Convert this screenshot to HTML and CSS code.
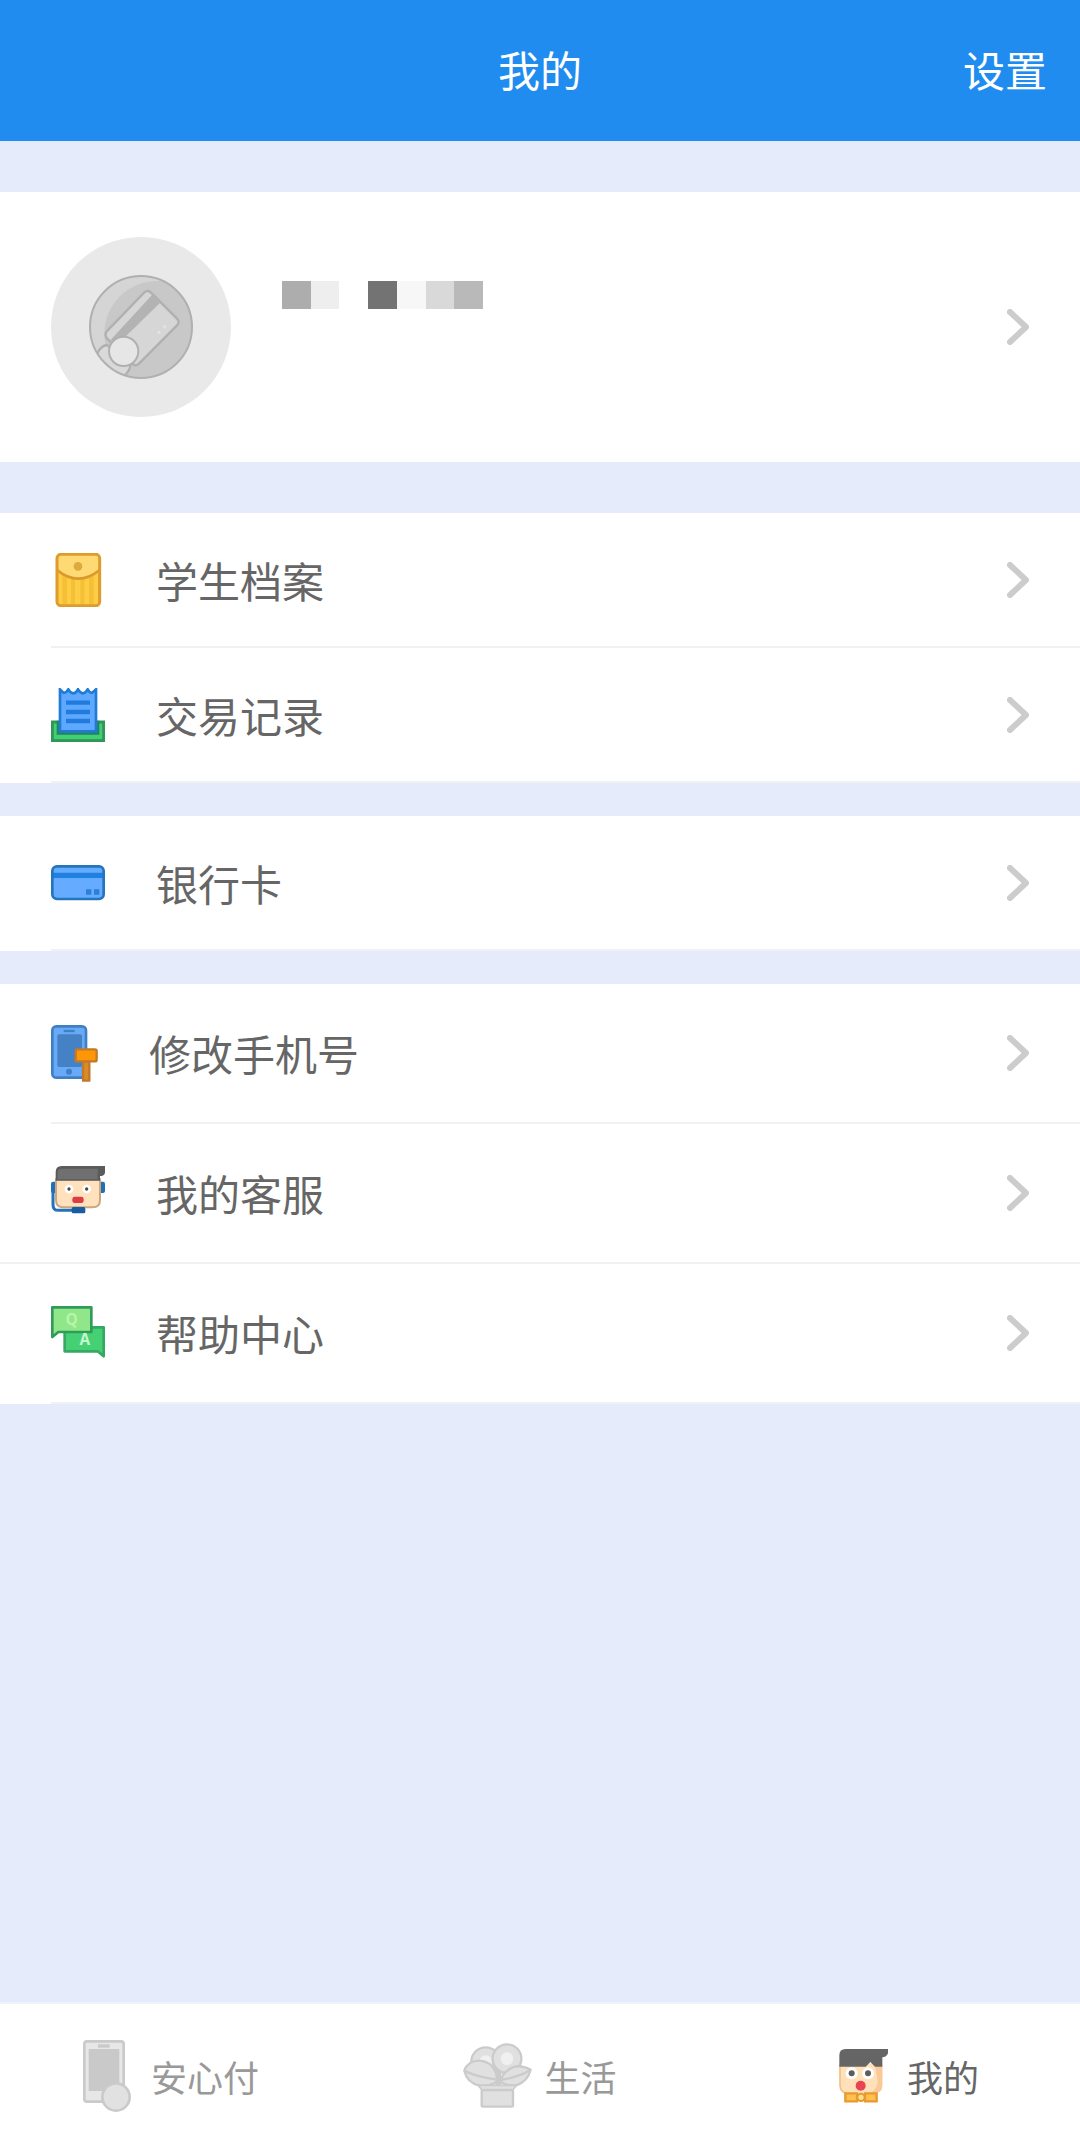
FILE: index.html
```html
<!DOCTYPE html>
<html lang="zh-CN">
<head>
    <meta charset="UTF-8">
    <meta name="viewport" content="width=device-width, initial-scale=1.0">
    <title>我的</title>
    <link rel="stylesheet" href="styles.css">
</head>
<body>

<header class="header">
    <h1 class="title">我的</h1>
    <a class="settings" href="#settings">设置</a>
</header>

<main class="content">
    <a class="profile" href="#profile" aria-label="个人资料">
        <svg class="avatar" viewBox="0 0 540 540">
            <clipPath id="badge"><circle cx="270" cy="270" r="154"/></clipPath>
            <circle cx="270" cy="270" r="270" fill="#e9e9e9"/>
            <g clip-path="url(#badge)">
                <circle cx="270" cy="270" r="154" fill="#d5d5d5"/>
                <circle cx="318" cy="290" r="158" fill="#c8c8c8"/>
                <g stroke="#b0b0b0" stroke-width="7" stroke-linejoin="round">
                    <path d="M138 350Q150 326 168 324L238 386Q236 402 220 416L190 440L110 400Z" fill="#d9d9d9"/>
                    <path d="M280 166Q291 158 300 167L378 245Q388 255 378 265L264 380Q254 390 244 380L168 304Q158 292 170 280Z" fill="#d6d6d6"/>
                </g>
                <path d="M305 172L329 196L206 316L178 310Z" fill="#b3b3b3"/>
                <path d="M324 280l6 6l-6 6l-6-6zM341 263l6 6l-6 6l-6-6z" fill="#e3e3e3"/>
                <circle cx="218" cy="343" r="44" fill="#e6e6e6" stroke="#b0b0b0" stroke-width="6"/>
            </g>
            <circle cx="270" cy="270" r="153" fill="none" stroke="#b0b0b0" stroke-width="6"/>
        </svg>
        <span class="masked-name">
            <i class="tone-1"></i><i class="tone-2"></i><i></i><i class="tone-3"></i><i class="tone-4"></i><i class="tone-5"></i><i class="tone-6"></i>
        </span>
        <svg class="arrow" viewBox="0 0 22 36"><path d="M3 3L19 18L3 33"/></svg>
    </a>

    <ul class="group">
        <li>
            <a class="row" href="#student">
                <svg class="icon" viewBox="0 0 162 162">
                    <rect x="18" y="4" width="128" height="154" rx="12" fill="#fccd45"/>
                    <path d="M34 66h14v88H34zM60 76h12v78H60zM88 76h12v78H88zM114 66h14v88h-14z" fill="#f6c036"/>
                    <path d="M18 50V16Q18 4 30 4H134Q146 4 146 16V50Q82 102 18 50Z" fill="#ffd974"/>
                    <path d="M18 51Q82 103 146 51" fill="none" stroke="#d9992b" stroke-width="8"/>
                    <rect x="18" y="4" width="128" height="154" rx="12" fill="none" stroke="#dd9c2b" stroke-width="9"/>
                    <circle cx="81" cy="40" r="13" fill="#dcab3c"/>
                </svg>
                <span class="label">学生档案</span>
                <svg class="arrow" viewBox="0 0 22 36"><path d="M3 3L19 18L3 33"/></svg>
            </a>
        </li>
        <li>
            <a class="row" href="#records">
                <svg class="icon" viewBox="0 0 162 162">
                    <rect x="4" y="102" width="154" height="56" fill="#41cf72" stroke="#31965a" stroke-width="9"/>
                    <path d="M17 98H145V140H17Z" fill="#23855e"/>
                    <path d="M27 4L37 14Q45 16 52 4Q59 16 67 16Q75 16 81 4Q88 16 96 16Q103 16 110 4Q117 16 124 14L135 4V130H27Z" fill="#5fa8ff" stroke="#207bd7" stroke-width="8"/>
                    <path d="M45 44H117M45 72H117M45 99H117" stroke="#207bdd" stroke-width="13"/>
                </svg>
                <span class="label">交易记录</span>
                <svg class="arrow" viewBox="0 0 22 36"><path d="M3 3L19 18L3 33"/></svg>
            </a>
        </li>
    </ul>

    <ul class="group">
        <li>
            <a class="row" href="#cards">
                <svg class="icon" viewBox="0 0 162 162">
                    <rect x="4" y="31" width="154" height="98" rx="14" fill="#65abff"/>
                    <path d="M4 50H158V66H4Z" fill="#1f80df"/>
                    <rect x="4" y="31" width="154" height="98" rx="14" fill="none" stroke="#2574be" stroke-width="8"/>
                    <path d="M105 100h16v16h-16zM129 100h16v16h-16z" fill="#2c7fd6"/>
                </svg>
                <span class="label">银行卡</span>
                <svg class="arrow" viewBox="0 0 22 36"><path d="M3 3L19 18L3 33"/></svg>
            </a>
        </li>
    </ul>

    <ul class="group group-tall">
        <li>
            <a class="row" href="#phone">
                <svg class="icon icon-phone" viewBox="0 0 141 171">
                    <rect x="4" y="4" width="101" height="154" rx="12" fill="#68aaf7" stroke="#417fc3" stroke-width="8"/>
                    <rect x="19" y="28" width="74" height="98" rx="5" fill="#4581c5"/>
                    <path d="M38 18H71" stroke="#417fc3" stroke-width="7"/>
                    <circle cx="54" cy="140" r="9" fill="#417fc3"/>
                    <g stroke="#c07a2b" stroke-width="7" stroke-linejoin="round">
                        <path d="M96 109H115V167H96Z" fill="#dc8a26"/>
                        <rect x="74" y="73" width="63" height="36" rx="5" fill="#ff9606"/>
                    </g>
                </svg>
                <span class="label">修改手机号</span>
                <svg class="arrow" viewBox="0 0 22 36"><path d="M3 3L19 18L3 33"/></svg>
            </a>
        </li>
        <li>
            <a class="row row-full" href="#service">
                <svg class="icon" viewBox="0 0 162 162">
                    <rect x="0" y="47" width="22" height="34" rx="6" fill="#1f70b9"/>
                    <rect x="140" y="47" width="22" height="34" rx="6" fill="#1f70b9"/>
                    <path d="M15 40H147V102Q147 124 125 124H37Q15 124 15 102Z" fill="#ffe2bd" stroke="#cba77e" stroke-width="6"/>
                    <path d="M14 44V18Q14 0 32 0H162V20Q160 30 147 30V44Z" fill="#5b5b5b"/>
                    <path d="M20 40V18Q20 8 32 8H140V40Z" fill="#707070"/>
                    <circle cx="54" cy="69" r="13" fill="#fff"/>
                    <circle cx="107" cy="69" r="13" fill="#fff"/>
                    <circle cx="54" cy="69" r="5" fill="#4b4b4b"/>
                    <circle cx="107" cy="69" r="5" fill="#4b4b4b"/>
                    <rect x="64" y="92" width="34" height="19" rx="7" fill="#dc3c43"/>
                    <path d="M6 76V116Q6 133 22 133H66" fill="none" stroke="#2472bc" stroke-width="9"/>
                    <rect x="62" y="123" width="41" height="19" rx="5" fill="#185d9f"/>
                </svg>
                <span class="label">我的客服</span>
                <svg class="arrow" viewBox="0 0 22 36"><path d="M3 3L19 18L3 33"/></svg>
            </a>
        </li>
        <li>
            <a class="row" href="#help">
                <svg class="icon" viewBox="0 0 162 162">
                    <path d="M41 64H158V151L140 136H41Z" fill="#45d173" stroke="#35a863" stroke-width="8" stroke-linejoin="round"/>
                    <path d="M4 4H121V78H22L4 93Z" fill="#8fe78a" stroke="#329b5b" stroke-width="8" stroke-linejoin="round"/>
                    <text class="bubble-q" x="62" y="57">Q</text>
                    <text class="bubble-a" x="101" y="117">A</text>
                </svg>
                <span class="label">帮助中心</span>
                <svg class="arrow" viewBox="0 0 22 36"><path d="M3 3L19 18L3 33"/></svg>
            </a>
        </li>
    </ul>
</main>

<nav class="tabbar">
    <a class="tab" href="#pay">
        <svg class="tab-icon" viewBox="0 0 168 216">
            <rect x="4" y="4" width="118" height="181" rx="8" fill="#e7e7e7" stroke="#cacaca" stroke-width="8"/>
            <rect x="17" y="27" width="92" height="126" fill="#c9c9c9"/>
            <path d="M45 18H80" stroke="#c9c9c9" stroke-width="10"/>
            <circle cx="99" cy="171" r="41" fill="#e1e1e1" stroke="#cacaca" stroke-width="8"/>
        </svg>
        <span>安心付</span>
    </a>
    <a class="tab" href="#life">
        <svg class="tab-icon tab-icon-life" viewBox="0 0 207 216">
            <g fill="#e0e0e0" stroke="#cbcbcb" stroke-width="7" stroke-linejoin="round">
                <circle cx="68" cy="65" r="43"/>
                <circle cx="68" cy="65" r="19" fill="#f0f0f0" stroke="none"/>
                <path d="M106 80V140" stroke-width="18"/>
                <circle cx="132" cy="56" r="43"/>
                <circle cx="132" cy="56" r="19" fill="#f0f0f0" stroke="none"/>
                <path d="M4 92Q14 62 50 62Q84 64 98 96Q104 112 100 126Q80 139 50 137Q12 128 4 92Z"/>
                <path d="M203 89Q162 68 136 90Q116 102 113 126Q132 139 160 136Q194 124 203 89Z"/>
                <path d="M8 94Q40 110 98 118M200 91Q172 110 113 120" fill="none"/>
                <path d="M46 136H160L148 152H58Z" stroke-width="5"/>
                <rect x="56" y="150" width="94" height="50" rx="4"/>
            </g>
        </svg>
        <span>生活</span>
    </a>
    <a class="tab active" href="#me">
        <svg class="tab-icon" viewBox="0 0 168 216">
            <path d="M2 70H130V136Q130 160 106 160H26Q2 160 2 136Z" fill="#ffe0b8"/>
            <path d="M108 76H130V136Q130 160 106 160H92Q116 148 116 124Z" fill="#f9ca98"/>
            <path d="M3 74V136Q4 156 22 160" fill="none" stroke="#f1c08b" stroke-width="5"/>
            <path d="M1 80V46Q1 27 20 27H147V40Q142 52 130 52V80H108L94 66L80 80Z" fill="#656565"/>
            <circle cx="38" cy="100" r="18" fill="#fff"/>
            <circle cx="87" cy="100" r="18" fill="#fff"/>
            <circle cx="38" cy="100" r="9" fill="#5d5d5d"/>
            <circle cx="87" cy="100" r="9" fill="#5d5d5d"/>
            <circle cx="65" cy="137" r="15" fill="#e84350"/>
            <path d="M19 160H54V184H19ZM78 160H113V184H78Z" fill="#ffc04f" stroke="#e89a31" stroke-width="7"/>
            <circle cx="66" cy="172" r="11" fill="#ffe08d" stroke="#e89a31" stroke-width="6"/>
        </svg>
        <span>我的</span>
    </a>
</nav>

</body>
</html>
```
FILE: styles.css
```css
* {
    box-sizing: border-box;
}
body {
    margin: 0;
    min-height: 100vh;
    display: flex;
    flex-direction: column;
    font-family: "Noto Sans CJK SC", sans-serif;
    font-size: 42px;
    line-height: 60px;
    color: #666;
    background-color: #e6ebfc;
}
a {
    color: inherit;
    text-decoration: none;
}
.header {
    display: grid;
    grid-template-columns: 1fr auto 1fr;
    align-items: center;
    height: 141px;
    padding: 0 33px 4px;
    color: #fff;
    background-color: #208cf0;
}
.title {
    grid-column: 2;
    margin: 0;
    font-size: 42px;
    font-weight: 400;
}
.settings {
    justify-self: end;
}
.content {
    flex: 1;
    padding-top: 51px;
}
.profile {
    display: flex;
    align-items: center;
    height: 270px;
    margin-bottom: 51px;
    padding: 0 51px;
    background-color: #fff;
}
.avatar {
    width: 180px;
    height: 180px;
}
.masked-name {
    display: flex;
    align-self: flex-start;
    width: 201px;
    margin: 89px 0 0 51px;
}
.masked-name i {
    flex: 1;
    height: 28px;
}
.tone-1 { background-color: #adadad; }
.tone-2 { background-color: #eee; }
.tone-3 { background-color: #737373; }
.tone-4 { background-color: #f7f7f7; }
.tone-5 { background-color: #d9d9d9; }
.tone-6 { background-color: #b9b9b9; }
.arrow {
    width: 22px;
    height: 36px;
    margin-left: auto;
    fill: none;
    stroke: #ccc;
    stroke-width: 6px;
    stroke-linecap: round;
    stroke-linejoin: round;
}
.group {
    list-style: none;
    margin: 0 0 33px;
    padding: 0;
}
.group li {
    background-color: #fff;
}
.row {
    display: flex;
    align-items: center;
    height: 135px;
    margin-left: 51px;
    padding-right: 51px;
    border-bottom: 2px solid #f0f1f4;
}
.group-tall .row {
    height: 140px;
}
.row-full {
    margin-left: 0;
    padding-left: 51px;
}
.icon {
    width: 54px;
    height: 54px;
    margin-right: 51px;
}
.icon-phone {
    width: 47px;
    height: 57px;
}
.bubble-q,
.bubble-a {
    font-family: "Open Sans", sans-serif;
    font-size: 46px;
    font-weight: 700;
    text-anchor: middle;
}
.bubble-q {
    fill: #b8f5a8;
}
.bubble-a {
    fill: #c4f7d2;
}
.tabbar {
    display: grid;
    grid-template-columns: 19fr 22fr 19fr;
    height: 151px;
    padding-bottom: 5px;
    font-size: 36px;
    color: #999;
    background-color: #fff;
    border-top: 2px solid #edf3f8;
}
.tab {
    display: flex;
    justify-content: center;
    align-items: center;
    gap: 12px;
}
.tab.active {
    color: #666;
}
.tab-icon {
    width: 56px;
    height: 72px;
}
.tab-icon-life {
    width: 69px;
}
```
